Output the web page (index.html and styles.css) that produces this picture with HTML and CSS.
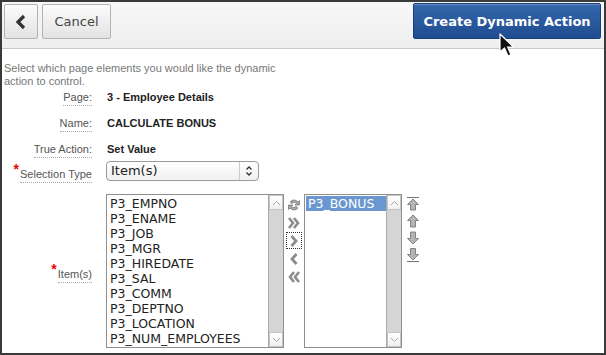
FILE: index.html
```html
<!DOCTYPE html>
<html lang="en">
<head>
  <meta charset="UTF-8">
  <title>Create Dynamic Action</title>
  <link rel="stylesheet" href="styles.css">
</head>
<body>
  <div class="frame">
    <div class="toolbar">
      <button class="btn btn-back" title="Previous">
        <svg width="12" height="16" viewBox="0 0 12 16"><polyline points="9,2 3,8 9,14" fill="none" stroke="#333" stroke-width="3.2" stroke-linejoin="miter"/></svg>
      </button>
      <button class="btn btn-cancel">Cancel</button>
      <button class="btn-primary">Create Dynamic Action</button>
    </div>

    <div class="content">
      <p class="intro">Select which page elements you would like the dynamic action to control.</p>

      <div class="field">
        <span class="label"><span class="lbl">Page:</span></span>
        <span class="value">3 - Employee Details</span>
      </div>
      <div class="field">
        <span class="label"><span class="lbl">Name:</span></span>
        <span class="value">CALCULATE BONUS</span>
      </div>
      <div class="field">
        <span class="label"><span class="lbl">True Action:</span></span>
        <span class="value">Set Value</span>
      </div>

      <div class="field field-select">
        <span class="label"><span class="req">*</span><span class="lbl">Selection Type</span></span>
        <div class="select">
          <span>Item(s)</span>
          <span class="select-arrow">
            <svg width="8" height="12" viewBox="0 0 8 12"><polyline points="1.5,4.5 4,2 6.5,4.5" fill="none" stroke="#333" stroke-width="1.3"/><polyline points="1.5,7.5 4,10 6.5,7.5" fill="none" stroke="#333" stroke-width="1.3"/></svg>
          </span>
        </div>
      </div>

      <div class="field field-items">
        <span class="label"><span class="req">*</span><span class="lbl">Item(s)</span></span>
        <div class="shuttle">
          <div class="listbox list-left">
            <div class="list-items">
              <div>P3_EMPNO</div>
              <div>P3_ENAME</div>
              <div>P3_JOB</div>
              <div>P3_MGR</div>
              <div>P3_HIREDATE</div>
              <div>P3_SAL</div>
              <div>P3_COMM</div>
              <div>P3_DEPTNO</div>
              <div>P3_LOCATION</div>
              <div>P3_NUM_EMPLOYEES</div>
            </div>
            <div class="scrollbar">
              <span class="sb-btn"><svg width="9" height="6" viewBox="0 0 9 6"><polyline points="1,5 4.5,1.5 8,5" fill="none" stroke="#aaa" stroke-width="1"/></svg></span>
              <span class="sb-btn"><svg width="9" height="6" viewBox="0 0 9 6"><polyline points="1,1 4.5,4.5 8,1" fill="none" stroke="#aaa" stroke-width="1"/></svg></span>
            </div>
          </div>

          <div class="shuttle-ctrl">
            <span class="ico">
              <svg width="14" height="14" viewBox="0 0 14 14"><path d="M3 4 A5 5 0 0 1 11 4 L12.5 2.5 L12.5 7 L8 7 L9.5 5.5 A3 3 0 0 0 5 5.5 Z" fill="#a8a8a8" stroke="#777" stroke-width="0.8"/><path d="M11 10 A5 5 0 0 1 3 10 L1.5 11.5 L1.5 7 L6 7 L4.5 8.5 A3 3 0 0 0 9 8.5 Z" fill="#a8a8a8" stroke="#777" stroke-width="0.8"/></svg>
            </span>
            <span class="ico">
              <svg width="14" height="14" viewBox="0 0 14 14"><polyline points="2,2 6,7 2,12" fill="none" stroke="#8c8c8c" stroke-width="2.6"/><polyline points="7,2 11,7 7,12" fill="none" stroke="#8c8c8c" stroke-width="2.6"/></svg>
            </span>
            <span class="ico ico-focus">
              <svg width="14" height="14" viewBox="0 0 14 14"><polyline points="4.5,2 9,7 4.5,12" fill="none" stroke="#8c8c8c" stroke-width="2.8"/></svg>
            </span>
            <span class="ico">
              <svg width="14" height="14" viewBox="0 0 14 14"><polyline points="9.5,2 5,7 9.5,12" fill="none" stroke="#8c8c8c" stroke-width="2.8"/></svg>
            </span>
            <span class="ico">
              <svg width="14" height="14" viewBox="0 0 14 14"><polyline points="7,2 3,7 7,12" fill="none" stroke="#8c8c8c" stroke-width="2.6"/><polyline points="12,2 8,7 12,12" fill="none" stroke="#8c8c8c" stroke-width="2.6"/></svg>
            </span>
          </div>

          <div class="listbox list-right">
            <div class="list-items">
              <div class="selected">P3_BONUS</div>
            </div>
            <div class="scrollbar">
              <span class="sb-btn"><svg width="9" height="6" viewBox="0 0 9 6"><polyline points="1,5 4.5,1.5 8,5" fill="none" stroke="#aaa" stroke-width="1"/></svg></span>
              <span class="sb-btn"><svg width="9" height="6" viewBox="0 0 9 6"><polyline points="1,1 4.5,4.5 8,1" fill="none" stroke="#aaa" stroke-width="1"/></svg></span>
            </div>
          </div>

          <div class="order-ctrl">
            <span class="ico">
              <svg width="14" height="16" viewBox="0 0 14 16"><line x1="1" y1="1.5" x2="13" y2="1.5" stroke="#777" stroke-width="1"/><path d="M7 3 L12.5 8.5 L9.5 8.5 L9.5 14 L4.5 14 L4.5 8.5 L1.5 8.5 Z" fill="#b4b4b4" stroke="#7a7a7a" stroke-width="0.9"/></svg>
            </span>
            <span class="ico">
              <svg width="14" height="16" viewBox="0 0 14 16"><path d="M7 2 L12.5 7.5 L9.5 7.5 L9.5 14 L4.5 14 L4.5 7.5 L1.5 7.5 Z" fill="#b4b4b4" stroke="#7a7a7a" stroke-width="0.9"/></svg>
            </span>
            <span class="ico">
              <svg width="14" height="16" viewBox="0 0 14 16"><path d="M7 14 L12.5 8.5 L9.5 8.5 L9.5 2 L4.5 2 L4.5 8.5 L1.5 8.5 Z" fill="#b4b4b4" stroke="#7a7a7a" stroke-width="0.9"/></svg>
            </span>
            <span class="ico">
              <svg width="14" height="16" viewBox="0 0 14 16"><path d="M7 13 L12.5 7.5 L9.5 7.5 L9.5 1.5 L4.5 1.5 L4.5 7.5 L1.5 7.5 Z" fill="#b4b4b4" stroke="#7a7a7a" stroke-width="0.9"/><line x1="1" y1="14.5" x2="13" y2="14.5" stroke="#777" stroke-width="1"/></svg>
            </span>
          </div>
        </div>
      </div>
    </div>

    <svg class="cursor" width="18" height="26" viewBox="0 0 18 26">
      <path d="M1 1 L1 19 L5.5 15 L9 23 L12 21.7 L8.6 14 L14.5 14 Z" fill="#111" stroke="#fff" stroke-width="1.2" stroke-linejoin="round"/>
    </svg>
  </div>
</body>
</html>
```

FILE: styles.css
```css
*, *::before, *::after { box-sizing: border-box; }
body {
  margin: 0;
  background: #fff;
  font-family: 'Liberation Sans', Arial, sans-serif;
}
.frame {
  position: relative;
  width: 606px;
  height: 355px;
  border: 2px solid #3a3a3a;
  background: #fff;
  overflow: hidden;
}

/* barre du haut */
.toolbar {
  height: 47px;
  padding: 2px 3px 0 2px;
  display: flex;
  align-items: flex-start;
  background: linear-gradient(#f7f7f7, #efefef);
  border-bottom: 1px solid #c9c9c9;
}
.btn {
  height: 35px;
  border: 1px solid #b3b3b3;
  border-radius: 2px;
  background: linear-gradient(#fbfbfb, #e3e3e3);
  font-family: 'DejaVu Sans', sans-serif;
  font-size: 13px;
  color: #444;
  padding: 0;
  cursor: pointer;
}
.btn-back {
  width: 34px;
  display: flex;
  align-items: center;
  justify-content: center;
}
.btn-cancel {
  width: 69px;
  margin-left: 4px;
}
.btn-primary {
  margin-left: auto;
  margin-top: -1px;
  width: 188px;
  height: 36px;
  border: 1px solid #1a3e78;
  border-radius: 2px;
  background: linear-gradient(#3467ad, #1f4c8f);
  box-shadow: inset 0 1px 0 rgba(255,255,255,0.25);
  color: #fff;
  font-family: 'DejaVu Sans', sans-serif;
  font-weight: bold;
  font-size: 13px;
  padding: 0;
  cursor: pointer;
}

/* formulaire */
.content {
  padding: 13px 0 0 2px;
}
.intro {
  margin: 0 0 2px;
  width: 290px;
  font-size: 11px;
  line-height: 13px;
  color: #777;
}
.field {
  display: grid;
  grid-template-columns: 88px 1fr;
  column-gap: 15px;
  align-items: center;
  font-size: 11px;
  line-height: 14px;
  margin-bottom: 12px;
}
.label {
  text-align: right;
  color: #555;
}
.lbl {
  border-bottom: 1px dotted #aaa;
  padding-bottom: 2px;
}
.value {
  font-weight: bold;
  color: #222;
}
.req {
  color: #e00;
  font-size: 14px;
  font-weight: bold;
  vertical-align: 4px;
  margin-right: 1px;
}
.field-select {
  margin-top: -7px;
  margin-bottom: 13px;
}
.select {
  width: 153px;
  height: 20px;
  margin-left: -1px;
  border: 1px solid #999;
  border-radius: 4px;
  background: linear-gradient(#fff, #f0f0f0);
  display: flex;
  align-items: center;
  justify-content: space-between;
  padding-left: 4px;
  font-family: 'DejaVu Sans', sans-serif;
  font-size: 13px;
  color: #222;
}
.select-arrow {
  width: 19px;
  height: 18px;
  border-left: 1px solid #ccc;
  display: flex;
  align-items: center;
  justify-content: center;
}

/* shuttle */
.shuttle {
  display: flex;
  align-items: flex-start;
  margin-left: -1px;
}
.listbox {
  height: 154px;
  border: 1px solid #8f8f8f;
  background: #fff;
  display: flex;
  font-family: 'DejaVu Sans', sans-serif;
  font-size: 12.5px;
  line-height: 15px;
  color: #222;
}
.list-left { width: 178px; }
.list-right { width: 98px; margin-left: 2px; }
.list-items {
  flex: 1;
  padding-top: 1px;
  overflow: hidden;
  white-space: nowrap;
}
.list-items div { padding-left: 3px; }
.list-items .selected {
  background: #6b97d1;
  color: #fff;
  margin-left: 1px;
  padding-left: 2px;
}
.scrollbar {
  width: 15px;
  background: #d5d5d5;
  border-left: 1px solid #aaa;
  display: flex;
  flex-direction: column;
  justify-content: space-between;
}
.sb-btn {
  height: 15px;
  background: linear-gradient(#fff, #f0f0f0);
  border: 1px solid #c4c4c4;
  display: flex;
  align-items: center;
  justify-content: center;
}
.shuttle-ctrl, .order-ctrl {
  display: flex;
  flex-direction: column;
  padding-top: 3px;
}
.shuttle-ctrl {
  width: 17px;
  margin-left: 1px;
  align-items: center;
  gap: 3px;
}
.shuttle-ctrl .ico {
  width: 16px;
  height: 15px;
  display: flex;
  align-items: center;
  justify-content: center;
  border: 1px solid transparent;
}
.shuttle-ctrl .ico-focus { border: 1px dotted #333; height: 17px; margin: -1px 0; }
.order-ctrl {
  margin-left: 4px;
  padding-top: 2px;
  gap: 1px;
}
.order-ctrl .ico { height: 16px; display: block; }
.order-ctrl svg { display: block; }

.cursor {
  position: absolute;
  left: 497px;
  top: 31px;
}
```
